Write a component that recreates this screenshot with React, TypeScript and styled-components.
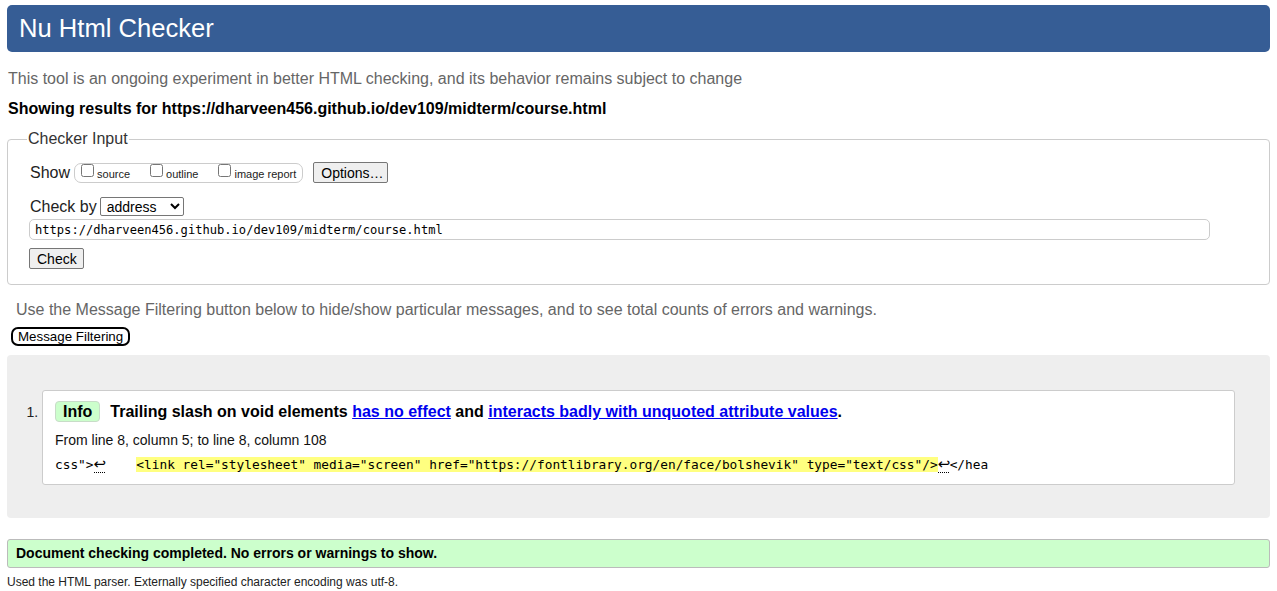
import React from 'react';
import styled, { createGlobalStyle } from 'styled-components';

const GlobalStyle = createGlobalStyle`
  html, body {
    margin: 0;
    padding: 0;
    background: #fff;
    font-family: "Liberation Sans", Arial, sans-serif;
    color: #000;
  }
`;

const Page = styled.div`
  padding: 5px 7px 0 7px;
`;

const Header = styled.h1`
  margin: 0;
  height: 47px;
  line-height: 46px;
  padding: 0 12px;
  background: #365d95;
  color: #fff;
  font-size: 25.6px;
  font-weight: normal;
  border-radius: 5px;
`;

const Intro = styled.p`
  margin: 18px 0 0 1px;
  font-size: 16px;
  line-height: 18px;
  color: #666;
`;

const Showing = styled.p`
  margin: 12px 0 0 1px;
  font-size: 16px;
  line-height: 18px;
  font-weight: bold;
`;

const Fieldset = styled.fieldset`
  margin: 12px 0 0 0;
  padding: 0 0 15px 21px;
  border: 1px solid #ccc;
  border-radius: 4px;
  min-width: 0;
`;

const Legend = styled.legend`
  margin-left: -2px;
  padding: 0 1px;
  font-size: 16px;
  line-height: 18px;
  color: #333;
`;

const Row = styled.div<{ $top: number }>`
  display: flex;
  align-items: center;
  margin-top: ${(p) => p.$top}px;
`;

const Label = styled.span`
  margin-left: 1px;
  font-size: 16px;
  line-height: 18px;
  color: #222;
`;

const ShowGroup = styled.div`
  display: flex;
  align-items: center;
  height: 18px;
  margin-left: 4px;
  padding: 0 6px 0 6px;
  border: 1px solid #ccc;
  border-radius: 7px;
`;

const Check = styled.label<{ $gap: number }>`
  display: flex;
  align-items: center;
  margin-right: ${(p) => p.$gap}px;
  font-size: 11px;
  color: #222;

  input {
    width: 13px;
    height: 13px;
    margin: -4px 3px 0 0;
  }

  span {
    margin-top: 3px;
  }
`;

const Button = styled.button`
  height: 21px;
  padding: 0 7px;
  font-family: "Liberation Sans", Arial, sans-serif;
  font-size: 14px;
  color: #000;
  background: #efefef;
  border: 1px solid #767676;
  border-radius: 2px;
`;

const OptionsButton = styled(Button)`
  margin-left: 10px;
  width: 75px;
`;

const Select = styled.select`
  margin-left: 3px;
  width: 84px;
  height: 19px;
  font-family: "Liberation Sans", Arial, sans-serif;
  font-size: 14px;
  padding: 0 2px;
  border: 1px solid #767676;
  border-radius: 2px;
  background: #fff;
`;

const UrlInput = styled.input`
  box-sizing: border-box;
  width: 1181px;
  height: 21px;
  margin: 0;
  padding: 0 5px;
  font-family: "DejaVu Sans Mono", "Liberation Mono", monospace;
  font-size: 12.1px;
  color: #000;
  border: 1px solid #ccc;
  border-radius: 5px;
  outline: none;
`;

const CheckButton = styled(Button)`
  width: 55px;
`;

const FilterNote = styled.p`
  margin: 16px 0 0 9px;
  font-size: 16px;
  line-height: 18px;
  color: #666;
`;

const FilterButton = styled.button`
  display: block;
  margin: 8px 0 0 4px;
  height: 19px;
  padding: 0 5px;
  font-family: "Liberation Sans", Arial, sans-serif;
  font-size: 13.33px;
  line-height: 15px;
  color: #000;
  background: #fff;
  border: 2px solid #000;
  border-radius: 7px;
`;

const Results = styled.div`
  margin-top: 9px;
  padding: 35px 35px 33px 0;
  background: #eee;
  border-radius: 4px;
`;

const List = styled.ol`
  margin: 0;
  padding: 0 0 0 35px;
  font-size: 14px;
`;

const Item = styled.li`
  background: #fff;
  border: 1px solid #ccc;
  border-radius: 3px;
  padding: 10px 12px 11px 12px;

  &::marker {
    color: #222;
  }
`;

const Title = styled.p`
  margin: 0;
  font-size: 16px;
  line-height: 20px;
  font-weight: bold;
  color: #000;

  a {
    color: #0000ee;
  }
`;

const Badge = styled.span`
  display: inline-block;
  margin-right: 10px;
  padding: 0 7px;
  height: 19px;
  line-height: 19px;
  background: #ccffcc;
  border: 1px solid #c8dcc8;
  border-radius: 4px;
`;

const Location = styled.p`
  margin: 10px 0 0 0;
  font-size: 14px;
  line-height: 16px;
  color: #111;
`;

const Extract = styled.p`
  margin: 9px 0 0 0;
  font-family: "DejaVu Sans Mono", "Liberation Mono", monospace;
  font-size: 12.8px;
  line-height: 16px;
  white-space: pre;
  color: #000;
`;

const Mark = styled.span`
  background: #ffff80;
`;

const Newline = styled.span`
  display: inline-block;
  width: 12px;
  height: 16px;
  font-family: "DejaVu Sans", sans-serif;
  font-size: 15px;
  line-height: 14px;
  text-align: center;
  vertical-align: top;
  background: linear-gradient(90deg, #000 50%, transparent 50%);
  background-repeat: repeat-x;
  background-size: 2px 1px;
  background-position: 0 15px;
`;

const Done = styled.p`
  margin: 21px 0 0 0;
  height: 27px;
  line-height: 27px;
  padding: 0 8px;
  font-size: 14px;
  font-weight: bold;
  background: #ccffcc;
  border: 1px solid #bbb;
  border-radius: 3px;
`;

const Footnote = styled.p`
  margin: 7px 0 0 0;
  font-size: 12px;
  line-height: 14px;
  color: #222;
`;

const App: React.FC = () => {
  return (
    <Page>
      <GlobalStyle />
      <Header>Nu Html Checker</Header>
      <Intro>
        This tool is an ongoing experiment in better HTML checking, and its behavior remains subject to change
      </Intro>
      <Showing>Showing results for https://dharveen456.github.io/dev109/midterm/course.html</Showing>
      <Fieldset>
        <Legend>Checker Input</Legend>
        <Row $top={14}>
          <Label>Show</Label>
          <ShowGroup>
            <Check $gap={20}>
              <input type="checkbox" />
              <span>source</span>
            </Check>
            <Check $gap={20}>
              <input type="checkbox" />
              <span>outline</span>
            </Check>
            <Check $gap={0}>
              <input type="checkbox" />
              <span>image report</span>
            </Check>
          </ShowGroup>
          <OptionsButton>Options…</OptionsButton>
        </Row>
        <Row $top={14}>
          <Label>Check by</Label>
          <Select defaultValue="address">
            <option value="address">address</option>
            <option value="upload">file upload</option>
            <option value="text">text input</option>
          </Select>
        </Row>
        <Row $top={3}>
          <UrlInput readOnly value="https://dharveen456.github.io/dev109/midterm/course.html" />
        </Row>
        <Row $top={8}>
          <CheckButton>Check</CheckButton>
        </Row>
      </Fieldset>
      <FilterNote>
        Use the Message Filtering button below to hide/show particular messages, and to see total counts of errors and warnings.
      </FilterNote>
      <FilterButton>Message Filtering</FilterButton>
      <Results>
        <List>
          <Item>
            <Title>
              <Badge>Info</Badge>
              Trailing slash on void elements <a href="#">has no effect</a> and{' '}
              <a href="#">interacts badly with unquoted attribute values</a>.
            </Title>
            <Location>From line 8, column 5; to line 8, column 108</Location>
            <Extract>
              css"&gt;<Newline>↩</Newline>    <Mark>&lt;link rel="stylesheet" media="screen" href="https://fontlibrary.org/en/face/bolshevik" type="text/css"/&gt;</Mark>
              <Newline>↩</Newline>&lt;/hea
            </Extract>
          </Item>
        </List>
      </Results>
      <Done>Document checking completed. No errors or warnings to show.</Done>
      <Footnote>Used the HTML parser. Externally specified character encoding was utf-8.</Footnote>
    </Page>
  );
};

export default App;
